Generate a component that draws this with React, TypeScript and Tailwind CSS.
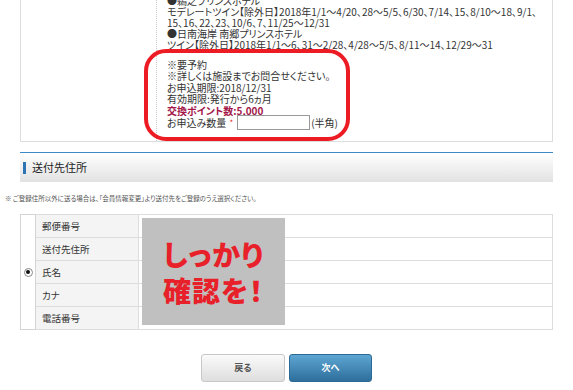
export default function App() {
  const labels = ["郵便番号", "送付先住所", "氏名", "カナ", "電話番号"];

  return (
    <div className="relative w-[573px] h-[390px] overflow-hidden bg-white text-[#333] font-['Noto_Sans_CJK_JP','Noto_Sans',sans-serif] [font-feature-settings:'palt']">
      {/* Upper detail box (cut off at the top) */}
      <div className="mx-[20px] flex h-[142px] border-x border-b border-[#dddddd]">
        <div className="w-[136px] shrink-0 border-r border-dotted border-[#cccccc]" />
        <div className="pl-[10px] -mt-[5px] text-[10px] leading-[11px] whitespace-nowrap">
          <p>●鵜之プリンスホテル</p>
          <p>モデレートツイン【除外日】2018年1/1～4/20、28～5/5、6/30、7/14、15、8/10～18、9/1、</p>
          <p>15、16、22、23、10/6、7、11/25～12/31</p>
          <p>●日南海岸 南郷プリンスホテル</p>
          <p>ツイン【除外日】2018年1/1～6、31～2/28、4/28～5/5、8/11～14、12/29～31</p>
          <div className="mt-[9px] leading-[11.4px]">
            <p>※要予約</p>
            <p>※詳しくは施設までお問合せください。</p>
            <p>お申込期限:2018/12/31</p>
            <p>有効期限:発行から6ヵ月</p>
            <p className="font-bold text-[#a3174a]">交換ポイント数:5,000</p>
            <div className="flex items-center h-[13px]">
              <span>お申込み数量</span>
              <span className="ml-[3px] text-[8px] text-[#e8202a]">*</span>
              <span className="ml-[4px] w-[73px] h-[15px] border border-[#999999] bg-white" />
              <span className="ml-[1px]">(半角)</span>
            </div>
          </div>
        </div>
      </div>

      {/* Red annotation ring */}
      <div className="absolute left-[144px] top-[49px] w-[206px] h-[92px] border-[4px] border-[#ed1c24] rounded-[22px]" />

      {/* Section header */}
      <div className="mx-[20px] mt-[10px] border-t border-[#3d8ac8]">
        <div className="flex items-center h-[29px] bg-gradient-to-b from-white to-[#e2e2e2]">
          <span className="ml-[3px] w-[3px] h-[12px] bg-[#2f73b7]" />
          <span className="ml-[6px] text-[11px] text-[#222]">送付先住所</span>
        </div>
      </div>

      <p className="mt-[12px] px-[5px] text-[6.5px] leading-[8px] text-[#555] whitespace-nowrap">
        ※ ご登録住所以外に送る場合は、「会員情報変更」より送付先をご登録のうえ選択ください。
      </p>

      {/* Address table */}
      <div className="relative mx-[20px] mt-[12px]">
        <table className="w-full border-collapse text-[9.5px]">
          <tbody>
            {labels.map((label, i) => (
              <tr key={label} className="h-[23px]">
                {i === 0 && (
                  <td rowSpan={5} className="w-[15px] border border-[#d4d4d4] p-0 align-middle">
                    <span className="mx-auto flex w-[9px] h-[9px] items-center justify-center rounded-full border border-[#888] bg-white">
                      <span className="w-[4px] h-[4px] rounded-full bg-[#111]" />
                    </span>
                  </td>
                )}
                <td className="w-[103px] border border-[#dddddd] bg-[#f4f4f4] pl-[6px] text-[#333]">{label}</td>
                <td className="border border-[#dddddd]" />
              </tr>
            ))}
          </tbody>
        </table>

        {/* Gray overlay note */}
        <div className="absolute left-[122px] top-[4px] w-[143px] h-[107px] bg-[#c0c0c0] flex flex-col items-center justify-center gap-[6px] font-black text-[#e8202a] text-[28px] leading-[30px] tracking-[1px]">
          <span>しっかり</span>
          <span>確認を！</span>
        </div>
      </div>

      {/* Buttons */}
      <div className="mt-[24px] flex justify-center gap-[4px]">
        <button className="w-[84px] h-[28px] rounded-[3px] border border-[#c8c8c8] bg-gradient-to-b from-[#fafafa] to-[#dedede] text-[9px] font-bold text-[#555]">
          戻る
        </button>
        <button className="w-[83px] h-[28px] rounded-[3px] border border-[#2b6a96] bg-gradient-to-b from-[#5ea6d3] to-[#2e6f9c] text-[9px] font-bold text-white">
          次へ
        </button>
      </div>
    </div>
  );
}
